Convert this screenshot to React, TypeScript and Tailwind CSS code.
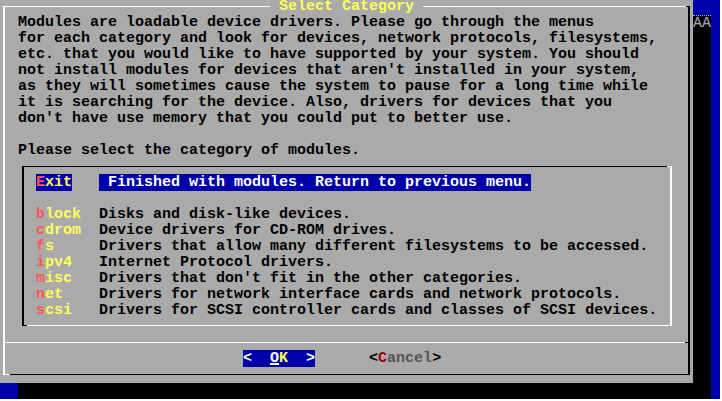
import React from 'react';

const bodyLines = [
  'Modules are loadable device drivers. Please go through the menus',
  'for each category and look for devices, network protocols, filesystems,',
  'etc. that you would like to have supported by your system. You should',
  "not install modules for devices that aren't installed in your system,",
  'as they will sometimes cause the system to pause for a long time while',
  'it is searching for the device. Also, drivers for devices that you',
  "don't have use memory that you could put to better use.",
];

const modules = [
  { tag: 'block', desc: 'Disks and disk-like devices.' },
  { tag: 'cdrom', desc: 'Device drivers for CD-ROM drives.' },
  { tag: 'fs', desc: 'Drivers that allow many different filesystems to be accessed.' },
  { tag: 'ipv4', desc: 'Internet Protocol drivers.' },
  { tag: 'misc', desc: "Drivers that don't fit in the other categories." },
  { tag: 'net', desc: 'Drivers for network interface cards and network protocols.' },
  { tag: 'scsi', desc: 'Drivers for SCSI controller cards and classes of SCSI devices.' },
];

const Tag = ({ tag }: { tag: string }) => (
  <span>
    <span className="text-[#ff5555]">{tag[0]}</span>
    <span className="text-[#ffff55]">{tag.slice(1)}</span>
  </span>
);

export default function App() {
  return (
    <div
      className="flex flex-col w-[722px] h-[401px] bg-white overflow-hidden font-bold text-[15px] leading-[16px] whitespace-pre"
      style={{ fontFamily: '"Liberation Mono", "DejaVu Sans Mono", monospace' }}
    >
      <div className="-mt-px w-[720px] h-[400px] shrink-0 bg-[#0000aa]">
        {/* dialog */}
        <div className="relative w-[693px] h-[384px] bg-[#aaaaaa] shadow-[18px_16px_0_0_#000] pt-[7px] pl-[3px]">
          <div className="relative w-[687px] h-[369px] border-t border-b border-l-2 border-r-2 border-t-white border-l-white border-r-black border-b-black pt-[8px] text-black">
            {/* corner pieces of the raised frame */}
            <div className="absolute -top-px -right-[2px] w-[4px] h-px bg-black" />
            <div className="absolute -bottom-px -left-[2px] w-[7px] h-px bg-white" />

            {/* intro text */}
            <div className="ml-[13px]">
              {bodyLines.map((line) => (
                <div key={line} className="h-[16px]">{line}</div>
              ))}
              <div className="h-[16px]" />
              <div className="h-[16px]">Please select the category of modules.</div>
            </div>

            {/* menu list */}
            <div className="relative ml-[17px] mt-[7px] w-[650px] h-[160px] border-t border-b border-l-2 border-r-2 border-t-black border-l-black border-r-white border-b-white pt-[8px] pl-[12px]">
              <div className="absolute -top-px -right-[2px] w-[5px] h-px bg-white" />
              <div className="absolute -bottom-px -left-[2px] w-[5px] h-px bg-black" />
              <div className="h-[16px]">
                <span className="bg-[#0000aa]"><Tag tag="Exit" /></span>
                {'   '}
                <span className="bg-[#0000aa] text-white"> Finished with modules. Return to previous menu.</span>
              </div>
              <div className="h-[16px]" />
              {modules.map((m) => (
                <div key={m.tag} className="h-[16px]">
                  <Tag tag={m.tag} />
                  {' '.repeat(7 - m.tag.length)}
                  {m.desc}
                </div>
              ))}
            </div>

            {/* separator */}
            <div className="mt-[16px] flex">
              <div className="flex-1 h-px bg-white" />
              <div className="w-[3px] h-px bg-black" />
            </div>

            {/* buttons */}
            <div className="mt-[8px] ml-[238px] h-[16px]">
              <span className="bg-[#0000aa] text-white">
                {'<  '}
                <span className="underline decoration-2 underline-offset-[1px]">O</span>
                <span className="text-[#ffff55]">K</span>
                {'  >'}
              </span>
              {'      '}
              <span>{'<'}</span>
              <span className="text-[#aa0000]">C</span>
              <span className="text-[#555555]">ancel</span>
              <span>{'>'}</span>
            </div>
          </div>

          {/* title over the top border */}
          <div className="absolute left-[270px] top-[1px] h-[14px] leading-[14px] bg-[#aaaaaa] text-[#ffff55]"> Select Category </div>
          {/* leftover characters showing through the shadow */}
          <div className="absolute left-[693px] top-[16px] h-[16px] border-t border-dotted border-[#aaaaaa] text-[#aaaaaa] font-normal leading-[15px]">AA</div>
        </div>
      </div>
    </div>
  );
}
